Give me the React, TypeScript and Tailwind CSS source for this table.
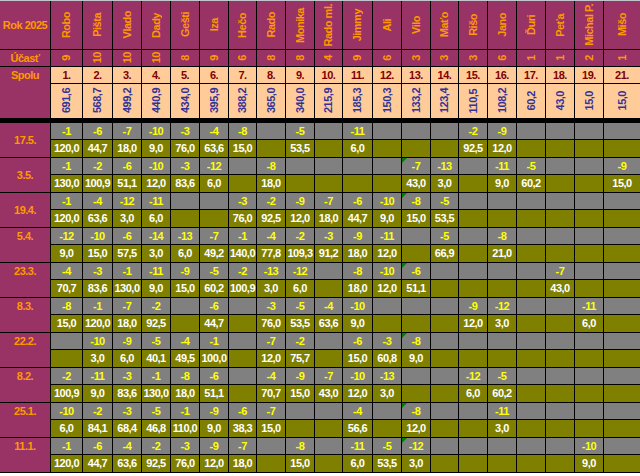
type Cell = [string, string] | null;

const E: Cell = null;

const players = [
  { name: "Robo", count: "9", rank: "1.", total: "691,6" },
  { name: "Pišta", count: "10", rank: "2.", total: "568,7" },
  { name: "Vlado", count: "10", rank: "3.", total: "499,2" },
  { name: "Dady", count: "10", rank: "4.", total: "440,9" },
  { name: "Gešti", count: "8", rank: "5.", total: "434,0" },
  { name: "Iza", count: "9", rank: "6.", total: "395,9" },
  { name: "Hečo", count: "6", rank: "7.", total: "388,2" },
  { name: "Rado", count: "8", rank: "8.", total: "365,0" },
  { name: "Monika", count: "8", rank: "9.", total: "340,0" },
  { name: "Rado ml.", count: "4", rank: "10.", total: "215,9" },
  { name: "Jimmy", count: "9", rank: "11.", total: "185,3" },
  { name: "Ali", count: "6", rank: "12.", total: "150,3" },
  { name: "Vilo", count: "3", rank: "13.", total: "133,2" },
  { name: "Maťo", count: "3", rank: "14.", total: "123,4" },
  { name: "Rišo", count: "3", rank: "15.", total: "110,5" },
  { name: "Jano", count: "6", rank: "16.", total: "108,2" },
  { name: "Ďuri", count: "1", rank: "17.", total: "60,2" },
  { name: "Peťa", count: "1", rank: "18.", total: "43,0" },
  { name: "Michal P.", count: "2", rank: "19.", total: "15,0" },
  { name: "Mišo", count: "1", rank: "21.", total: "15,0" },
];

// one entry per tournament, 20 cells = [place, points]
const rounds: { date: string; mid?: boolean; flag?: boolean; cells: Cell[] }[] = [
  {
    date: "17.5.",
    mid: true,
    cells: [["-1", "120,0"], ["-6", "44,7"], ["-7", "18,0"], ["-10", "9,0"], ["-3", "76,0"], ["-4", "63,6"], ["-8", "15,0"], E, ["-5", "53,5"], E, ["-11", "6,0"], E, E, E, ["-2", "92,5"], ["-9", "12,0"], E, E, E, E],
  },
  {
    date: "3.5.",
    mid: true,
    flag: true,
    cells: [["-1", "130,0"], ["-2", "100,9"], ["-6", "51,1"], ["-10", "12,0"], ["-3", "83,6"], ["-12", "6,0"], E, ["-8", "18,0"], E, E, E, E, ["-7", "43,0"], ["-13", "3,0"], E, ["-11", "9,0"], ["-5", "60,2"], E, E, ["-9", "15,0"]],
  },
  {
    date: "19.4.",
    mid: true,
    flag: true,
    cells: [["-1", "120,0"], ["-4", "63,6"], ["-12", "3,0"], ["-11", "6,0"], E, E, ["-3", "76,0"], ["-2", "92,5"], ["-9", "12,0"], ["-7", "18,0"], ["-6", "44,7"], ["-10", "9,0"], ["-8", "15,0"], ["-5", "53,5"], E, E, E, E, E, E],
  },
  {
    date: "5.4.",
    cells: [["-12", "9,0"], ["-10", "15,0"], ["-6", "57,5"], ["-14", "3,0"], ["-13", "6,0"], ["-7", "49,2"], ["-1", "140,0"], ["-4", "77,8"], ["-2", "109,3"], ["-3", "91,2"], ["-9", "18,0"], ["-11", "12,0"], E, ["-5", "66,9"], E, ["-8", "21,0"], E, E, E, E],
  },
  {
    date: "23.3.",
    flag: true,
    cells: [["-4", "70,7"], ["-3", "83,6"], ["-1", "130,0"], ["-11", "9,0"], ["-9", "15,0"], ["-5", "60,2"], ["-2", "100,9"], ["-13", "3,0"], ["-12", "6,0"], E, ["-8", "18,0"], ["-10", "12,0"], ["-6", "51,1"], E, E, E, E, ["-7", "43,0"], E, E],
  },
  {
    date: "8.3.",
    cells: [["-8", "15,0"], ["-1", "120,0"], ["-7", "18,0"], ["-2", "92,5"], E, ["-6", "44,7"], E, ["-3", "76,0"], ["-5", "53,5"], ["-4", "63,6"], ["-10", "9,0"], E, E, E, ["-9", "12,0"], ["-12", "3,0"], E, E, ["-11", "6,0"], E],
  },
  {
    date: "22.2.",
    flag: true,
    cells: [E, ["-10", "3,0"], ["-9", "6,0"], ["-5", "40,1"], ["-4", "49,5"], ["-1", "100,0"], E, ["-7", "12,0"], ["-2", "75,7"], E, ["-6", "15,0"], ["-3", "60,8"], ["-8", "9,0"], E, E, E, E, E, E, E],
  },
  {
    date: "8.2.",
    cells: [["-2", "100,9"], ["-11", "9,0"], ["-3", "83,6"], ["-1", "130,0"], ["-8", "18,0"], ["-6", "51,1"], E, ["-4", "70,7"], ["-9", "15,0"], ["-7", "43,0"], ["-10", "12,0"], ["-13", "3,0"], E, E, ["-12", "6,0"], ["-5", "60,2"], E, E, E, E],
  },
  {
    date: "25.1.",
    flag: true,
    cells: [["-10", "6,0"], ["-2", "84,1"], ["-3", "68,4"], ["-5", "46,8"], ["-1", "110,0"], ["-9", "9,0"], ["-6", "38,3"], ["-7", "15,0"], E, E, ["-4", "56,6"], E, ["-8", "12,0"], E, E, ["-11", "3,0"], E, E, E, E],
  },
  {
    date: "11.1.",
    flag: true,
    cells: [["-1", "120,0"], ["-6", "44,7"], ["-4", "63,6"], ["-2", "92,5"], ["-3", "76,0"], ["-9", "12,0"], ["-7", "18,0"], E, ["-8", "15,0"], E, ["-11", "6,0"], ["-5", "53,5"], ["-12", "3,0"], E, E, E, E, E, ["-10", "9,0"], E],
  },
];

const edge = (i: number) => (i === 19 ? "border-b border-black" : "border-r border-b border-black");

function Vertical({ children }: { children: string }) {
  return <span className="[writing-mode:vertical-rl] rotate-180 whitespace-nowrap leading-none">{children}</span>;
}

export default function App() {
  return (
    <div className="w-[640px] h-[476px] overflow-hidden bg-white border-t border-[#c4c4cc] font-['Liberation_Sans',Arial,sans-serif] font-bold text-[11px] tracking-[-0.5px]">
      <div className="grid grid-cols-[51px_32px_30px_29px_29px_29px_29px_28px_29px_29px_28px_30px_29px_29px_28px_29px_29px_29px_29px_29px_36px] grid-rows-[49px_17px_17px_35px_4px_repeat(10,17px_18px)]">
        {/* Header: names */}
        <div className="bg-[#993366] text-[#FF9900] border-r border-b border-black flex items-center justify-center">Rok 2025</div>
        {players.map((p, i) => (
          <div key={p.name} className={`bg-[#993366] text-[#FF9900] flex items-center justify-center ${edge(i)}`}>
            <Vertical>{p.name}</Vertical>
          </div>
        ))}

        {/* Participation */}
        <div className="bg-[#993366] text-[#FF9900] border-r border-b border-black flex items-center justify-center">Účasť</div>
        {players.map((p, i) => (
          <div key={p.name} className={`bg-[#993366] text-[#FF9900] flex items-center justify-center ${edge(i)}`}>
            <Vertical>{p.count}</Vertical>
          </div>
        ))}

        {/* Ranking + totals */}
        <div className="row-span-2 bg-[#993366] text-[#FF9900] border-r border-b border-black flex justify-center leading-[17px]">Spolu</div>
        {players.map((p, i) => (
          <div key={p.name} className={`bg-[#FFCC99] text-[#800000] flex items-center justify-center ${edge(i)}`}>
            {p.rank}
          </div>
        ))}
        {players.map((p, i) => (
          <div key={p.name} className={`bg-[#FFCC99] text-[#333399] flex items-center justify-center ${edge(i)}`}>
            <Vertical>{p.total}</Vertical>
          </div>
        ))}

        <div className="col-span-full bg-black" />

        {rounds.map((r) => (
          <div key={r.date} className="contents">
            <div className={`row-span-2 bg-[#993366] text-[#FF9900] border-r border-b border-black flex justify-center ${r.mid ? "items-center" : "items-start leading-[17px]"}`}>
              {r.date}
            </div>
            {r.cells.map((c, i) => (
              <div key={`p${i}`} className={`relative bg-[#808080] text-[#FFFF00] flex items-center justify-center ${edge(i)}`}>
                {r.flag && i === 12 && (
                  <span className="absolute left-0 top-0 w-0 h-0 border-t-[5px] border-r-[5px] border-t-[#008000] border-r-transparent" />
                )}
                {c ? c[0] : ""}
              </div>
            ))}
            {r.cells.map((c, i) => (
              <div key={`v${i}`} className={`bg-[#808000] text-white flex items-center justify-center ${edge(i)}`}>
                {c ? c[1] : ""}
              </div>
            ))}
          </div>
        ))}
      </div>
    </div>
  );
}
